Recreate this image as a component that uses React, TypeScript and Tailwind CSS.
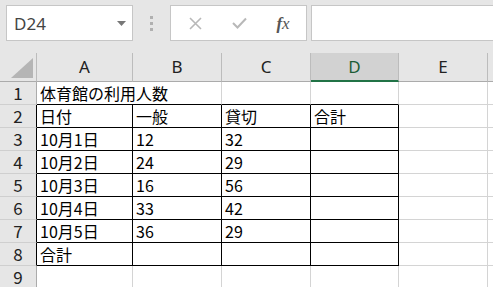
import React from 'react';

const cols = ['A', 'B', 'C', 'D', 'E'];

// 行データ (A〜D)
const rows: string[][] = [
  ['体育館の利用人数', '', '', ''],
  ['日付', '一般', '貸切', '合計'],
  ['10月1日', '12', '32', ''],
  ['10月2日', '24', '29', ''],
  ['10月3日', '16', '56', ''],
  ['10月4日', '33', '42', ''],
  ['10月5日', '36', '29', ''],
  ['合計', '', '', ''],
  ['', '', '', ''],
];

const cellFont = { fontFamily: '"Noto Sans CJK JP", "Noto Sans", sans-serif' };

const App: React.FC = () => {
  return (
    <div className="w-[493px] h-[287px] overflow-hidden bg-white" style={{ fontFamily: '"Noto Sans", "Liberation Sans", sans-serif' }}>
      {/* 数式バー */}
      <div className="h-[53px] bg-[#e6e6e6] flex items-start pt-[5px] pl-[6px] gap-0">
        <div className="w-[127px] h-[36px] bg-white border border-[#c6c6c6] flex items-center justify-between pl-[7px] pr-[6px]">
          <span className="text-[17px] text-[#444] leading-none">D24</span>
          <svg width="9" height="5" viewBox="0 0 9 5">
            <path d="M0 0h9L4.5 5z" fill="#777" />
          </svg>
        </div>
        <div className="w-[37px] h-[36px] flex flex-col items-center justify-center gap-[3px]">
          <div className="w-[3px] h-[3px] bg-[#b0b0b0]" />
          <div className="w-[3px] h-[3px] bg-[#b0b0b0]" />
          <div className="w-[3px] h-[3px] bg-[#b0b0b0]" />
        </div>
        <div className="w-[137px] h-[36px] bg-white border border-[#c6c6c6] flex items-center">
          <div className="w-[44px] flex justify-center ml-[2px]">
            <svg width="13" height="13" viewBox="0 0 13 13">
              <path d="M1 1l11 11M12 1L1 12" stroke="#b8b8b8" strokeWidth="1.6" />
            </svg>
          </div>
          <div className="w-[44px] flex justify-center">
            <svg width="15" height="12" viewBox="0 0 15 12">
              <path d="M1 6l4.5 4.5L14 1.5" stroke="#b8b8b8" strokeWidth="2" fill="none" />
            </svg>
          </div>
          <div className="w-[44px] flex justify-center">
            <span className="text-[17px] italic text-[#555] leading-none" style={{ fontFamily: '"Liberation Serif", serif' }}>
              <span className="font-bold">f</span>x
            </span>
          </div>
        </div>
        <div className="flex-1 h-[36px] bg-white border border-[#c6c6c6] ml-[4px] border-r-0" />
      </div>

      {/* シート */}
      <div className="grid grid-cols-[37px_96px_89px_89px_88px_89px_1fr]">
        {/* 列見出し */}
        <div className="h-[29px] bg-[#e6e6e6] border-r border-b border-[#ababab] border-r-[#bcbcbc] relative">
          <svg className="absolute left-[11px] top-[5px]" width="22" height="20" viewBox="0 0 22 20">
            <path d="M22 0V20H0z" fill="#b5b5b5" />
          </svg>
        </div>
        {cols.map((c) => (
          <div
            key={c}
            className={
              c === 'D'
                ? 'h-[29px] bg-[#d2d2d2] border-r border-[#bcbcbc] border-b-2 border-b-[#217346] flex items-center justify-center text-[17px] text-[#1d5c36]'
                : 'h-[29px] bg-[#e6e6e6] border-r border-b border-[#bcbcbc] border-b-[#ababab] flex items-center justify-center text-[17px] text-[#222]'
            }
          >
            {c}
          </div>
        ))}
        <div className="h-[29px] bg-[#e6e6e6] border-b border-[#ababab]" />

        {rows.map((r, i) => {
          const rowNo = i + 1;
          const inTable = rowNo >= 2 && rowNo <= 8;
          return (
            <React.Fragment key={rowNo}>
              <div
                className={
                  'h-[23px] bg-[#e6e6e6] border-b border-b-[#cfcfcf] border-r flex items-center justify-center text-[17px] text-[#222] ' +
                  (inTable ? 'border-r-black' : 'border-r-[#ababab]')
                }
                style={cellFont}
              >
                {rowNo}
              </div>
              {r.map((v, j) => {
                const isA1 = rowNo === 1 && j === 0;
                const rightBlack = inTable;
                const bottomBlack = rowNo >= 1 && rowNo <= 8;
                return (
                  <div
                    key={j}
                    className={
                      'h-[23px] border-b flex items-center pl-[3px] whitespace-nowrap text-[16px] text-black leading-none ' +
                      (isA1 ? '' : 'border-r ') +
                      (rightBlack ? 'border-r-black ' : 'border-r-[#d4d4d4] ') +
                      (bottomBlack ? 'border-b-black' : 'border-b-[#d4d4d4]')
                    }
                    style={cellFont}
                  >
                    {v}
                  </div>
                );
              })}
              <div className="h-[23px] border-r border-b border-[#d4d4d4]" />
              <div className="h-[23px] border-b border-[#d4d4d4]" />
            </React.Fragment>
          );
        })}
      </div>
    </div>
  );
};

export default App;
